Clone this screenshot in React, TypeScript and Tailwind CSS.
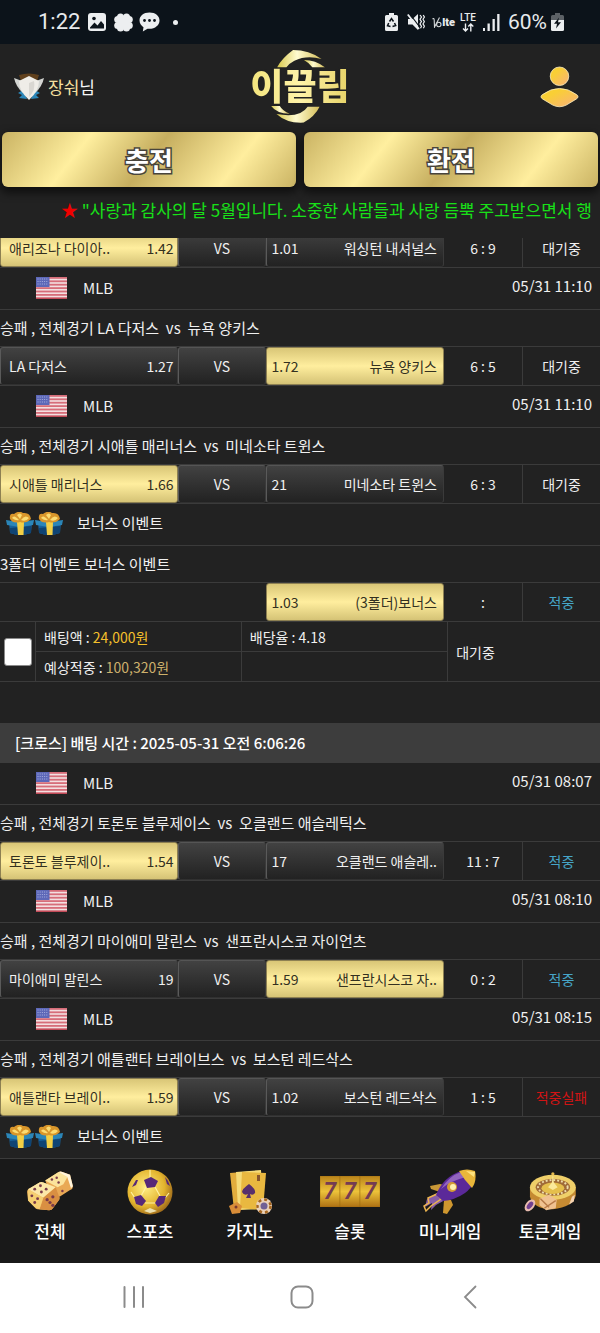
import React from "react";

type Result = "대기중" | "적중" | "적중실패";

interface Match {
  title: string;
  date?: string;
  home?: string;
  homeOdds?: string;
  away: string;
  awayOdds: string;
  pick: "home" | "away";
  score: string;
  result: Result;
  bonus?: boolean;
}

const firstTicket: Match[] = [
  { title: "승패 , 전체경기 LA 다저스  vs  뉴욕 양키스", date: "05/31 11:10", home: "LA 다저스", homeOdds: "1.27", away: "뉴욕 양키스", awayOdds: "1.72", pick: "away", score: "6 : 5", result: "대기중" },
  { title: "승패 , 전체경기 시애틀 매리너스  vs  미네소타 트윈스", date: "05/31 11:10", home: "시애틀 매리너스", homeOdds: "1.66", away: "미네소타 트윈스", awayOdds: "21", pick: "home", score: "6 : 3", result: "대기중" },
  { title: "3폴더 이벤트 보너스 이벤트", away: "(3폴더)보너스", awayOdds: "1.03", pick: "away", score: ":", result: "적중", bonus: true },
];

const secondTicket: Match[] = [
  { title: "승패 , 전체경기 토론토 블루제이스  vs  오클랜드 애슬레틱스", date: "05/31 08:07", home: "토론토 블루제이..", homeOdds: "1.54", away: "오클랜드 애슬레..", awayOdds: "17", pick: "home", score: "11 : 7", result: "적중" },
  { title: "승패 , 전체경기 마이애미 말린스  vs  샌프란시스코 자이언츠", date: "05/31 08:10", home: "마이애미 말린스", homeOdds: "19", away: "샌프란시스코 자..", awayOdds: "1.59", pick: "away", score: "0 : 2", result: "적중" },
  { title: "승패 , 전체경기 애틀랜타 브레이브스  vs  보스턴 레드삭스", date: "05/31 08:15", home: "애틀랜타 브레이..", homeOdds: "1.59", away: "보스턴 레드삭스", awayOdds: "1.02", pick: "home", score: "1 : 5", result: "적중실패" },
];

const resultColor: Record<Result, string> = {
  대기중: "text-[#f0f0f0]",
  적중: "text-[#46a5c8]",
  적중실패: "text-[#d01414]",
};

function StatusBar() {
  return (
    <div className="flex h-[44px] items-center justify-between bg-[#0c131a] pr-[36px] pl-[38px] font-['Roboto',sans-serif] text-[#e8eaec]">
      <div className="flex items-center">
        <span className="mr-[8px] text-[22px] leading-none">1:22</span>
        <svg width="18" height="18" viewBox="0 0 18 18" className="mr-[8px]">
          <rect width="18" height="18" rx="3" fill="#eceef0" />
          <path d="M2 14.5 L6.5 9.5 L9.5 12.5 L13 8 L16 11.5 V15.5 H2Z" fill="#0c131a" />
          <circle cx="6" cy="5.5" r="1.8" fill="#0c131a" />
        </svg>
        <svg width="19" height="19" viewBox="0 0 19 19" fill="#eceef0" className="mr-[6px]">
          <circle cx="6.5" cy="4" r="3.5" /><circle cx="12.5" cy="4" r="3.5" />
          <circle cx="3.8" cy="6.5" r="3.6" /><circle cx="15.2" cy="6.5" r="3.6" />
          <circle cx="3.8" cy="12.5" r="3.6" /><circle cx="15.2" cy="12.5" r="3.6" />
          <circle cx="6.5" cy="15" r="3.5" /><circle cx="12.5" cy="15" r="3.5" />
          <rect x="4" y="4" width="11" height="11" />
        </svg>
        <svg width="21" height="20" viewBox="0 0 21 20" className="mr-[13px]">
          <path d="M10.5 0.5 C4.500 0.500 0.500 4 0.500 8.500 C0.500 11.500 2.500 14 4.500 15.300 L3.800 19.500 L8.500 16.700 C15.500 17.500 20.500 13.500 20.500 8.500 C20.500 4 16.500 0.500 10.500 0.500Z" fill="#eceef0" />
          <circle cx="5.500" cy="8.500" r="1.4" fill="#0c131a" /><circle cx="10.500" cy="8.500" r="1.4" fill="#0c131a" /><circle cx="15.500" cy="8.500" r="1.4" fill="#0c131a" />
        </svg>
        <span className="size-[5px] rounded-full bg-[#eceef0]" />
      </div>
      <div className="flex items-center">
        <svg width="13" height="18" viewBox="0 0 13 18" className="mr-[9px]">
          <path d="M4 0 H9 V2 H11.500 Q13 2 13 3.500 V16.500 Q13 18 11.500 18 H1.500 Q0 18 0 16.500 V3.500 Q0 2 1.500 2 H4Z" fill="#eceef0" />
          <path d="M4.500 8.500 L6.500 5.500 L8.500 8.500 M9.500 10 L10.700 12.500 L7.500 13.500 M5.500 13.500 L2.500 12.800 L3.700 10" fill="none" stroke="#0c131a" strokeWidth="1.500" />
        </svg>
        <svg width="18" height="18" viewBox="0 0 18 18" fill="none" stroke="#eceef0" className="mr-[7px]">
          <path d="M3 6 H5.500 L11 1 V17 L5.500 11.500 H1 V6Z" fill="#eceef0" stroke="none" />
          <path d="M2.500 0.500 L13 14.500" stroke="#0c131a" strokeWidth="1.200" />
          <path d="M0.800 1.500 L12 16" strokeWidth="1.800" />
          <path d="M13 2 l1.500 2 l-1.500 2.300 l1.500 2.300 l-1.500 2.300 l1.500 2.300 l-1 2 M16.200 2 l1.200 2 l-1.400 2.300 l1.400 2.300 l-1.400 2.300 l1.400 2.300 l-1 2" strokeWidth="1.200" />
        </svg>
        <span className="mr-[5px] flex items-center text-[11px] leading-none font-black">
          <svg width="10" height="11" viewBox="0 0 10 11" fill="none" stroke="#d5d8da" strokeWidth="1.100" aria-label="Vo">
            <path d="M0.500 2 Q2 0.500 2.200 3 L2.500 10 L7.500 0.500" /><circle cx="6.800" cy="7.500" r="2.200" />
          </svg>
          lte
        </span>
        <span className="mr-[7px] flex flex-col items-center text-[10px] leading-none font-medium">
          LTE
          <svg width="12" height="9" viewBox="0 0 12 9" fill="none" stroke="#eceef0" strokeWidth="1.400">
            <path d="M3.500 0.500 V8 M1 5.500 L3.500 8 L6 5.500 M8.800 8.500 V1 M6.300 3.500 L8.800 1 L11.300 3.500" />
          </svg>
        </span>
        <svg width="17" height="17" viewBox="0 0 17 17" fill="#eceef0" className="mr-[8px]">
          <rect x="0" y="14" width="2" height="3" /><rect x="4.500" y="9.500" width="2.300" height="7.500" /><rect x="9.500" y="5" width="2.300" height="12" /><rect x="14.200" y="0" width="2.300" height="17" />
        </svg>
        <span className="mr-[4px] text-[21px] leading-none">60%</span>
        <svg width="13" height="18" viewBox="0 0 13 18">
          <path d="M4 0 H9 V2 H11.500 Q13 2 13 3.500 V8 H0 V3.500 Q0 2 1.500 2 H4Z" fill="#5c6166" />
          <path d="M0 7 H13 V16.500 Q13 18 11.500 18 H1.500 Q0 18 0 16.500Z" fill="#eceef0" />
          <path d="M8 4.500 L3 10.800 H6 L5 15.500 L10 9.200 H7Z" fill="#0c131a" />
        </svg>
      </div>
    </div>
  );
}

function RankBadge() {
  return (
    <svg width="30" height="28" viewBox="0 0 30 28">
      <path d="M5 2 Q15 -1 25 2 L23 8 H7Z" fill="#60401c" />
      <path d="M4 20 L9 17 L13 26 L5 25 L8 22Z" fill="#2b86b8" />
      <path d="M26 20 L21 17 L17 26 L25 25 L22 22Z" fill="#2b86b8" />
      <path d="M0 5 L8 8 L12 16 L9 20 Q2 14 0 5Z" fill="#d3d5d2" />
      <path d="M30 5 L22 8 L18 16 L21 20 Q28 14 30 5Z" fill="#d3d5d2" />
      <path d="M15 3 L19 5 L25 8 Q25 18 15 27 Q5 18 5 8 L11 5Z" fill="#efede8" />
      <path d="M15 10 L20 8 Q22 17 15 24Z" fill="#d9d7d2" />
    </svg>
  );
}

function Logo() {
  return (
    <a href="#home" className="relative flex h-[73px] items-center justify-center pb-[6px]">
      <svg viewBox="48 24 300 220" className="absolute inset-0 h-full w-full" aria-hidden="true">
        <defs>
          <linearGradient id="swoosh" x1="0" y1="0" x2="1" y2="0">
            <stop offset="0" stopColor="#d8c84c" />
            <stop offset="0.45" stopColor="#fffbd0" />
            <stop offset="1" stopColor="#d4bd58" />
          </linearGradient>
        </defs>
        <g fill="url(#swoosh)">
          <path d="M130 76 Q145 48 178 24 Q226 24 264 51 Q220 38 182 56 Q166 64 158 76Z" />
          <path d="M211 54 Q246 54 274 76 H236 Q226 62 211 54Z" />
          <path d="M112 193 H138 Q146 208 168 216 Q128 216 112 193Z" />
          <path d="M128 217 Q200 230 222 195 H258 Q244 224 210 243 Q160 246 128 217Z" />
        </g>
      </svg>
      <span className="relative bg-linear-to-r from-[#f3e47c] via-[#fff3a8] to-[#e6d265] bg-clip-text font-['Noto_Sans_CJK_KR',sans-serif] text-[36px] leading-[40px] font-black text-transparent drop-shadow-[0_0_1px_#222]">이끌림</span>
    </a>
  );
}

function Header() {
  return (
    <header className="grid h-[85px] grid-cols-[1fr_auto_1fr] items-center px-[14px]">
      <div className="flex items-center gap-1 text-[17px] text-[#f7f7f7]">
        <RankBadge />
        <span><b className="font-normal text-[#f6e0a0]">장숴</b>님</span>
      </div>
      <Logo />
      <button type="button" aria-label="내 정보" className="mr-[7px] justify-self-end">
        <svg width="39" height="42" viewBox="0 0 40 42">
          <defs>
            <linearGradient id="person" x1="0" y1="0" x2="1" y2="1">
              <stop offset="0.3" stopColor="#f9cf35" />
              <stop offset="1" stopColor="#f8b07c" />
            </linearGradient>
          </defs>
          <g fill="url(#person)" stroke="#fff1c0" strokeWidth="0.800">
            <circle cx="20" cy="10" r="9.500" />
            <path d="M1 31 Q1 29.500 3 28.500 Q11 22.500 20 22.500 Q29 22.500 37 28.500 Q39 29.500 39 31 Q39 32.500 37 33.500 L27 39.500 Q20 43 13 39.500 L3 33.500 Q1 32.500 1 31Z" />
          </g>
        </svg>
      </button>
    </header>
  );
}

function WalletButton({ label }: { label: string }) {
  return (
    <button type="button" className="h-[55px] flex-1 rounded-[6px] bg-[linear-gradient(128deg,#cab363_0%,#ffef9f_27%,#c6ae5f_50%,#ffee9e_77%,#cab363_100%)] text-[26px] leading-none font-bold text-white shadow-[0_4px_8px_2px_rgba(0,0,0,0.55)] [-webkit-text-stroke:3px_#48443c] [paint-order:stroke_fill]">
      {label}
    </button>
  );
}

function Flag() {
  return (
    <svg width="31" height="22" viewBox="0 0 31 22" className="mr-4" role="img" aria-label="미국">
      <rect width="31" height="22" fill="#f3dfe0" />
      {[0, 1, 2, 3, 4, 5, 6].map((i) => (
        <rect key={i} y={i * 3.4} width="31" height="1.800" fill={i === 6 ? "#c24a57" : "#d66d79"} />
      ))}
      <rect width="13.500" height="10" fill="#5d68b8" />
      <path d="M1.500 2 H12 M1.500 4.500 H12 M1.500 7 H12" stroke="#a7aede" strokeWidth="1" strokeDasharray="1 1.200" />
    </svg>
  );
}

function Gift() {
  return (
    <svg width="28" height="23" viewBox="0 0 28 23">
      <path d="M3 10 H26 L25 21 Q14 25 4 21Z" fill="#17629c" />
      <path d="M4 16 L25 14 L25 21 Q14 25 4 21Z" fill="#0f4474" />
      <path d="M0 8 L13 10 L28 8 L27 13 L14 15 L1 13Z" fill="#2b86b8" />
      <path d="M11 10 H18 L17.500 23 H12Z" fill="#f3cf45" />
      <path d="M4 7 Q3 1 8 2 Q13 -2 17 1 Q24 0 25 7 Q20 12 14 10 Q7 12 4 7Z" fill="#d9962b" />
      <path d="M6 6 Q8 2 13 8 Q10 9 6 6Z M15 8 Q19 2 23 6 Q20 10 15 8Z M11 3 Q14 0 16 3 L14 7Z" fill="#fbdc72" />
    </svg>
  );
}

function Odds({ name, odds, picked, side }: { name: string; odds: string; picked: boolean; side: "home" | "away" }) {
  return (
    <div className={`flex h-[38px] items-center justify-between rounded-[3px] border ${side === "home" ? "pr-[3px] pl-[8px]" : "pr-[6px] pl-[4px]"} ${picked ? "border-[#8d8052] bg-linear-to-b from-[#d9c677] via-[#ffee9e] to-[#d5c376] text-[#33301f]" : "border-t-[#555] border-r-[#3a3a3a] border-b-[#303030] border-l-[#5a5a5a] bg-linear-to-b from-[#424242] to-[#222]"}`}>
      <span>{side === "home" ? name : odds}</span>
      <span>{side === "home" ? odds : name}</span>
    </div>
  );
}

function OddsRow({ match }: { match: Match }) {
  const cell = "h-[39px] border-b border-[#3b3b3b] p-0 text-center";
  if (match.bonus) {
    return (
      <tr>
        <td colSpan={2} className={cell} />
        <td className={cell}><Odds name={match.away} odds={match.awayOdds} picked side="away" /></td>
        <td className={cell}>{match.score}</td>
        <td className={`${cell} border-l ${resultColor[match.result]}`}>{match.result}</td>
      </tr>
    );
  }
  return (
    <tr>
      <td className={cell}><Odds name={match.home ?? ""} odds={match.homeOdds ?? ""} picked={match.pick === "home"} side="home" /></td>
      <td className={cell}>
        <div className="flex h-[38px] items-center justify-center rounded-[3px] border border-t-[#555] border-r-[#3a3a3a] border-b-[#303030] border-l-[#5a5a5a] bg-linear-to-b from-[#424242] to-[#222]">VS</div>
      </td>
      <td className={cell}><Odds name={match.away} odds={match.awayOdds} picked={match.pick === "away"} side="away" /></td>
      <td className={cell}>{match.score}</td>
      <td className={`${cell} border-l ${resultColor[match.result]}`}>{match.result}</td>
    </tr>
  );
}

function BonusRow() {
  return (
    <tr>
      <td colSpan={5} className="h-[42px] border-b border-[#3b3b3b] p-0">
        <div className="flex items-center pb-[3px] pl-[6px] text-[15px]">
          <Gift />
          <span className="mr-[14px] ml-[1px]"><Gift /></span>
          보너스 이벤트
        </div>
      </td>
    </tr>
  );
}

function MatchRows({ match }: { match: Match }) {
  return (
    <>
      {match.bonus ? (
        <BonusRow />
      ) : (
        <tr>
          <td colSpan={5} className="h-[42px] border-b border-[#3b3b3b] p-0">
            <div className="flex items-center pr-[8px] pb-[1px] pl-[36px] text-[15px]">
              <Flag />
              MLB
              <time className="ml-auto pb-[4px]">{match.date}</time>
            </div>
          </td>
        </tr>
      )}
      <tr>
        <td colSpan={5} className="h-[37px] border-b border-[#3b3b3b] p-0 text-[15px] whitespace-pre">{match.title}</td>
      </tr>
      <OddsRow match={match} />
    </>
  );
}

function TicketTable({ children }: { children: React.ReactNode }) {
  return (
    <table className="w-full table-fixed border-separate border-spacing-0">
      <colgroup>
        <col className="w-[29.6%]" />
        <col className="w-[14.8%]" />
        <col className="w-[29.6%]" />
        <col className="w-[13%]" />
        <col />
      </colgroup>
      <tbody>{children}</tbody>
    </table>
  );
}

function TicketSummary() {
  const line = "border-[#3b3b3b]";
  return (
    <table className="w-full table-fixed border-separate border-spacing-0">
      <colgroup>
        <col className="w-[6%]" />
        <col className="w-[34.3%]" />
        <col className="w-[34.4%]" />
        <col />
      </colgroup>
      <tbody>
        <tr>
          <td rowSpan={2} className={`border-r border-b ${line} p-0`}>
            <input type="checkbox" aria-label="배팅 선택" className="mx-auto block size-[28px] appearance-none rounded-[3px] border border-[#8a8a8a] bg-white checked:bg-[#f3cf45]" />
          </td>
          <td className={`h-[30px] border-r border-b ${line} p-0 pl-[8px]`}>배팅액 : <span className="text-[#f5c02c]">24,000원</span></td>
          <td className={`h-[30px] border-r border-b ${line} p-0 pl-[8px]`}>배당율 : 4.18</td>
          <td rowSpan={2} className={`border-b ${line} p-0 pl-[8px]`}>대기중</td>
        </tr>
        <tr>
          <td className={`h-[30px] border-r border-b ${line} p-0 pl-[8px]`}>예상적중 : <span className="text-[#cdb06c]">100,320원</span></td>
          <td className={`h-[30px] border-r border-b ${line} p-0`} />
        </tr>
      </tbody>
    </table>
  );
}

function DiceIcon() {
  return (
    <svg width="48" height="42" viewBox="0 0 50 44">
      <path d="M20 10 L34 1 Q36 0 38 1 L46 4 L49 16 Q49 19 46 20 L35 27 L25 22Z" fill="#e9a955" />
      <path d="M20 10 L34 1 L44 5 L39 14 L33 17Z" fill="#fbe39c" />
      <path d="M34 1 Q36 0 38 1 L46 4 L49 16 L47 18 L43 6Z" fill="#fff4dc" />
      <path d="M1 22 Q1 19 4 18 L14 12 Q16 11 18 12 L31 17 L35 28 Q35 30 34 31 L28 39 Q27 41 24 41 L12 40 Q10 40 9 38 L2 31Z" fill="#efb45a" />
      <path d="M2 19 L14 12 Q16 11 18 12 L31 17 L18 28Z" fill="#fce7a8" />
      <path d="M18 28 L31 17 L35 28 Q35 30 34 31 L28 39 Q27 41 24 41 L14 40Z" fill="#d98f42" />
      <path d="M2 19 L18 28 L14 40 L9 38 L2 31Z" fill="#f6cf72" />
      <g fill="#7a3a4a">
        <circle cx="9" cy="19" r="1.500" /><circle cx="15" cy="15.500" r="1.500" /><circle cx="21" cy="19" r="1.500" /><circle cx="16" cy="22" r="1.500" />
        <circle cx="6" cy="26" r="1.500" /><circle cx="12" cy="29" r="1.500" /><circle cx="9" cy="33" r="1.500" />
        <circle cx="22" cy="30" r="1.700" /><circle cx="25" cy="33" r="1.700" /><circle cx="28" cy="36" r="1.700" /><circle cx="28" cy="27" r="1.700" />
        <circle cx="27" cy="9" r="1.300" /><circle cx="32" cy="7" r="1.300" /><circle cx="34" cy="12" r="1.300" /><circle cx="38" cy="21" r="1.300" />
      </g>
    </svg>
  );
}

function BallIcon() {
  return (
    <svg width="46" height="46" viewBox="0 0 46 46">
      <defs>
        <radialGradient id="ball" cx="0.4" cy="0.4" r="0.65">
          <stop offset="0" stopColor="#ffed83" /><stop offset="0.65" stopColor="#e3b42e" /><stop offset="1" stopColor="#9a661a" />
        </radialGradient>
      </defs>
      <circle cx="23" cy="23" r="22.500" fill="url(#ball)" />
      <path d="M23 1 V9 M19 18 L14 27 M28 18 L33 27 M18 34 H29 M4 23 L8 29 M42 24 L38 29" stroke="#fff1a0" strokeWidth="1.200" />
      <g fill="#562878">
        <path d="M17 11 L24 8 L31 12 L28 18 L20 19Z" /><path d="M7 28 L14 26 L19 32 L15 37 L9 35Z" /><path d="M28 34 L32 27 L39 27 L37 34 L31 38Z" />
        <path d="M5 18 L9 11 L11 11 L9 16Z" /><path d="M38 8 L41 12 L43 17 L40 15Z" />
      </g>
      <path d="M17 42 L23 39 L30 42 L23 44Z" fill="#ece1b0" />
    </svg>
  );
}

function CardsIcon() {
  return (
    <svg width="44" height="46" viewBox="0 0 44 46">
      <path d="M2 4 L27 2 L30 39 L6 41Z" fill="#e2ad3d" />
      <path d="M8 3 L33 1 L35 40 L10 41Z" fill="#f6dc79" />
      <path d="M14 3 L38 4 L35 41 L12 39Z" fill="#e9b840" />
      <path d="M21 15 Q28 20 27 24 Q25 27 22 25 L23 29 H18 L20 25 Q16 27 14 23 Q14 20 21 15Z" fill="#58306c" />
      <path d="M29 6 H32 V12 H29Z" fill="#87552c" />
      <path d="M1 37 L9 33 L14 37 L12 44 L4 45Z" fill="#d98d38" />
      <circle cx="8" cy="38" r="1.500" fill="#7a3a30" />
      <circle cx="36" cy="37" r="8" fill="#ead1ba" />
      <circle cx="36" cy="37" r="6.500" fill="none" stroke="#a7671f" strokeWidth="2.500" strokeDasharray="3 3" />
      <circle cx="36" cy="37" r="3.500" fill="#716095" />
    </svg>
  );
}

function SlotIcon() {
  return (
    <svg width="60" height="31" viewBox="0 0 60 31">
      <defs>
        <linearGradient id="reel" x1="0" y1="0" x2="0" y2="1">
          <stop offset="0" stopColor="#b9831a" /><stop offset="0.5" stopColor="#edc23a" /><stop offset="1" stopColor="#ad7013" />
        </linearGradient>
      </defs>
      {[0, 20, 40].map((x) => (
        <g key={x}>
          <rect x={x} width="20" height="31" fill="url(#reel)" stroke="#9c6b12" strokeWidth="0.500" />
          <text x={x + 10} y="23" textAnchor="middle" fontFamily="Roboto, sans-serif" fontStyle="italic" fontWeight="bold" fontSize="23" fill="#753c52">7</text>
        </g>
      ))}
    </svg>
  );
}

function RocketIcon() {
  return (
    <svg width="54" height="46" viewBox="0 0 54 46">
      <path d="M17 23 L8 20 L7 17 L17 15 L25 17Z" fill="#c99737" />
      <path d="M28 31 L30 36 L24 45 L20 44 L21 31Z" fill="#cf972f" />
      <path d="M14 24 L22 31 L13 36 L8 41 L9 34 L2 38 L4 30Z" fill="#875da8" />
      <path d="M14 25 L18 30 L8 37 L3 42 L1 37 L6 34 L5 29Z" fill="none" stroke="#ecb44f" strokeWidth="1.500" />
      <path d="M13 26 Q20 8 38 2 L51 2 Q54 15 42 24 Q32 31 20 32Z" fill="#5b2999" />
      <path d="M18 20 Q26 7 38 3 L43 8 Q27 12 18 20Z" fill="#9264bf" />
      <path d="M36 2 Q44 -1 52 2 Q54 12 49 19 Q42 12 36 2Z" fill="#e9b63a" />
      <path d="M43 2 L52 3 L51 8Z" fill="#ffe27d" />
      <circle cx="29" cy="18" r="5" fill="#d49b35" /><circle cx="30" cy="18" r="3" fill="#fff0b0" />
    </svg>
  );
}

function RouletteIcon() {
  return (
    <svg width="54" height="42" viewBox="0 0 56 44">
      <path d="M7 17 V27 Q10 40 31 40 Q52 38 55 26 V17Z" fill="#c58a32" />
      <ellipse cx="31" cy="17" rx="24" ry="13" fill="#efcf69" />
      <ellipse cx="31" cy="17" rx="18" ry="9" fill="#a06b38" />
      <ellipse cx="31" cy="17" rx="15.500" ry="7.500" fill="none" stroke="#eeddac" strokeWidth="2" strokeDasharray="2 2" />
      <ellipse cx="31" cy="18" rx="12" ry="6" fill="#e5bf4c" />
      <path d="M31 2 L32 12 L36 17 L31 20 L26 17 L30 12Z" fill="#fbe99b" />
      <circle cx="31" cy="3" r="1.700" fill="#e6bc50" />
      <path d="M17 29 L27 25 L35 30 L34 39 L24 41 L17 36Z" fill="#f0c291" />
      <path d="M18 29 L27 38 M34 31 L22 39" stroke="#b77a48" strokeWidth="1.500" />
      <ellipse cx="7" cy="36" rx="4.500" ry="7" transform="rotate(38 7 36)" fill="#e9bcb0" />
      <ellipse cx="7" cy="36" rx="2.500" ry="4.500" transform="rotate(38 7 36)" fill="#71408f" />
      <path d="M48 35 L51 27 L54 25 L53 32Z" fill="#f4d2b0" />
    </svg>
  );
}

const tabs = [
  { label: "전체", icon: <DiceIcon /> },
  { label: "스포츠", icon: <BallIcon /> },
  { label: "카지노", icon: <CardsIcon /> },
  { label: "슬롯", icon: <SlotIcon /> },
  { label: "미니게임", icon: <RocketIcon /> },
  { label: "토큰게임", icon: <RouletteIcon /> },
];

function TabBar() {
  return (
    <nav className="grid h-[104px] grid-cols-6 bg-[#191919] pt-[8px]">
      {tabs.map((tab) => (
        <a key={tab.label} href="#menu" className="flex flex-col items-center text-[17px] leading-[30px] font-medium text-white">
          <span className="flex h-[49px] items-center">{tab.icon}</span>
          {tab.label}
        </a>
      ))}
    </nav>
  );
}

function SystemBar() {
  return (
    <div className="grid h-[70px] grid-cols-3 items-center justify-items-center bg-white pr-[46px] pb-[2px] pl-[50px] text-[#8b8b8b]">
      <button type="button" aria-label="최근 앱">
        <svg width="22" height="24" viewBox="0 0 22 24" fill="none" stroke="currentColor" strokeWidth="2" strokeLinecap="round"><path d="M1.500 2 V22 M11 2 V22 M20 2 V22" /></svg>
      </button>
      <button type="button" aria-label="홈">
        <svg width="24" height="24" viewBox="0 0 24 24" fill="none" stroke="currentColor" strokeWidth="2"><rect x="1.500" y="1.500" width="21" height="21" rx="6.500" /></svg>
      </button>
      <button type="button" aria-label="뒤로">
        <svg width="14" height="24" viewBox="0 0 14 24" fill="none" stroke="currentColor" strokeWidth="1.800" strokeLinecap="round"><path d="M12.500 1.500 L2 12 L12.500 22.500" /></svg>
      </button>
    </div>
  );
}

export default function App() {
  return (
    <div className="flex flex-col bg-[#222] font-['Noto_Sans_CJK_KR',sans-serif] text-[14px] leading-[20px] text-[#f0f0f0]">
      <StatusBar />
      <Header />
      <div className="flex gap-2 px-[2px] pt-[3px]">
        <WalletButton label="충전" />
        <WalletButton label="환전" />
      </div>
      <p className="h-[51px] overflow-hidden pl-[61px] text-[17px] leading-[46px] whitespace-nowrap text-[#18e018]">
        <span className="text-[#f00000]">★</span> "사랑과 감사의 달 5월입니다. 소중한 사람들과 사랑 듬뿍 주고받으면서 행
      </p>
      <main className="overflow-hidden">
        <div className="-mt-[9px]">
          <TicketTable>
            <OddsRow match={{ title: "", home: "애리조나 다이아..", homeOdds: "1.42", away: "워싱턴 내셔널스", awayOdds: "1.01", pick: "home", score: "6 : 9", result: "대기중" }} />
            {firstTicket.map((match) => <MatchRows key={match.title} match={match} />)}
          </TicketTable>
          <TicketSummary />
          <h2 className="mt-[41px] flex h-[40px] items-center bg-[#3d3d3d] pl-[15px] text-[15px] font-medium text-white">[크로스] 배팅 시간 : 2025-05-31 오전 6:06:26</h2>
          <TicketTable>
            {secondTicket.map((match) => <MatchRows key={match.title} match={match} />)}
            <BonusRow />
          </TicketTable>
        </div>
      </main>
      <TabBar />
      <SystemBar />
    </div>
  );
}
